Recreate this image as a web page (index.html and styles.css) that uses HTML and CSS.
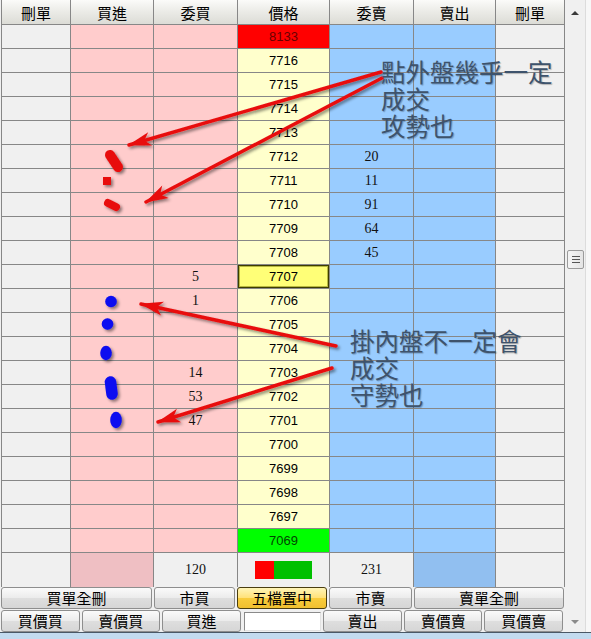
FILE: index.html
```html
<!DOCTYPE html>
<html lang="zh-Hant">
<head>
<meta charset="utf-8">
<title>五檔報價</title>
<link rel="stylesheet" href="styles.css">
</head>
<body>
<div class="window">
  <div class="top">
    <div class="main">
      <div class="grid">
        <div class="h">刪單</div><div class="h">買進</div><div class="h">委買</div><div class="h">價格</div><div class="h">委賣</div><div class="h">賣出</div><div class="h">刪單</div>

        <div class="c side"></div><div class="c buy"></div><div class="c buy q"></div><div class="c price up">8133</div><div class="c sell q"></div><div class="c sell"></div><div class="c side"></div>
        <div class="c side"></div><div class="c buy"></div><div class="c buy q"></div><div class="c price">7716</div><div class="c sell q"></div><div class="c sell"></div><div class="c side"></div>
        <div class="c side"></div><div class="c buy"></div><div class="c buy q"></div><div class="c price">7715</div><div class="c sell q"></div><div class="c sell"></div><div class="c side"></div>
        <div class="c side"></div><div class="c buy"></div><div class="c buy q"></div><div class="c price">7714</div><div class="c sell q"></div><div class="c sell"></div><div class="c side"></div>
        <div class="c side"></div><div class="c buy"></div><div class="c buy q"></div><div class="c price">7713</div><div class="c sell q"></div><div class="c sell"></div><div class="c side"></div>
        <div class="c side"></div><div class="c buy"></div><div class="c buy q"></div><div class="c price">7712</div><div class="c sell q">20</div><div class="c sell"></div><div class="c side"></div>
        <div class="c side"></div><div class="c buy"></div><div class="c buy q"></div><div class="c price">7711</div><div class="c sell q">11</div><div class="c sell"></div><div class="c side"></div>
        <div class="c side"></div><div class="c buy"></div><div class="c buy q"></div><div class="c price">7710</div><div class="c sell q">91</div><div class="c sell"></div><div class="c side"></div>
        <div class="c side"></div><div class="c buy"></div><div class="c buy q"></div><div class="c price">7709</div><div class="c sell q">64</div><div class="c sell"></div><div class="c side"></div>
        <div class="c side"></div><div class="c buy"></div><div class="c buy q"></div><div class="c price">7708</div><div class="c sell q">45</div><div class="c sell"></div><div class="c side"></div>
        <div class="c side"></div><div class="c buy"></div><div class="c buy q">5</div><div class="c price cur">7707</div><div class="c sell q"></div><div class="c sell"></div><div class="c side"></div>
        <div class="c side"></div><div class="c buy"></div><div class="c buy q">1</div><div class="c price">7706</div><div class="c sell q"></div><div class="c sell"></div><div class="c side"></div>
        <div class="c side"></div><div class="c buy"></div><div class="c buy q"></div><div class="c price">7705</div><div class="c sell q"></div><div class="c sell"></div><div class="c side"></div>
        <div class="c side"></div><div class="c buy"></div><div class="c buy q"></div><div class="c price">7704</div><div class="c sell q"></div><div class="c sell"></div><div class="c side"></div>
        <div class="c side"></div><div class="c buy"></div><div class="c buy q">14</div><div class="c price">7703</div><div class="c sell q"></div><div class="c sell"></div><div class="c side"></div>
        <div class="c side"></div><div class="c buy"></div><div class="c buy q">53</div><div class="c price">7702</div><div class="c sell q"></div><div class="c sell"></div><div class="c side"></div>
        <div class="c side"></div><div class="c buy"></div><div class="c buy q">47</div><div class="c price">7701</div><div class="c sell q"></div><div class="c sell"></div><div class="c side"></div>
        <div class="c side"></div><div class="c buy"></div><div class="c buy q"></div><div class="c price">7700</div><div class="c sell q"></div><div class="c sell"></div><div class="c side"></div>
        <div class="c side"></div><div class="c buy"></div><div class="c buy q"></div><div class="c price">7699</div><div class="c sell q"></div><div class="c sell"></div><div class="c side"></div>
        <div class="c side"></div><div class="c buy"></div><div class="c buy q"></div><div class="c price">7698</div><div class="c sell q"></div><div class="c sell"></div><div class="c side"></div>
        <div class="c side"></div><div class="c buy"></div><div class="c buy q"></div><div class="c price">7697</div><div class="c sell q"></div><div class="c sell"></div><div class="c side"></div>
        <div class="c side"></div><div class="c buy"></div><div class="c buy q"></div><div class="c price down">7069</div><div class="c sell q"></div><div class="c sell"></div><div class="c side"></div>

        <div class="s side"></div><div class="s buysum"></div><div class="s q">120</div><div class="s mid"><span class="bar"><span class="bar-r"></span><span class="bar-g"></span></span></div><div class="s q">231</div><div class="s sellsum"></div><div class="s side"></div>
      </div>
      <div class="btns1">
        <div class="btn">買單全刪</div>
        <div class="btn">市買</div>
        <div class="btn gold">五檔置中</div>
        <div class="btn">市賣</div>
        <div class="btn">賣單全刪</div>
      </div>
      <div class="btns2">
        <div class="btn">買價買</div>
        <div class="btn">賣價買</div>
        <div class="btn">買進</div>
        <div class="field"></div>
        <div class="btn">賣出</div>
        <div class="btn">賣價賣</div>
        <div class="btn">買價賣</div>
      </div>
    </div>
    <div class="scroll">
      <div class="sb-up"><span class="tri-up"></span></div>
      <div class="thumb"><span></span><span></span><span></span></div>
      <div class="sb-fill"></div>
      <div class="sb-down"><span class="tri-down"></span></div>
    </div>
    <div class="edge"></div>
  </div>
  <div class="footer"></div>

  <svg class="overlay" width="591" height="639" viewBox="0 0 591 639" aria-hidden="true">
    <defs>
      <filter id="sh" x="-20%" y="-20%" width="140%" height="140%">
        <feDropShadow dx="2" dy="2" stdDeviation="1.5" flood-color="#000" flood-opacity="0.45"/>
      </filter>
      <marker id="ah" viewBox="-24 -8 26 16" refX="0" refY="0" markerWidth="26" markerHeight="16" markerUnits="userSpaceOnUse" orient="auto">
        <path d="M1,0 L-22,-7 L-16,0 L-22,7 Z" fill="#e81010"/>
      </marker>
    </defs>
    <g filter="url(#sh)" stroke="#e81010" stroke-width="3.5" fill="none" stroke-linecap="round">
      <line x1="381" y1="72" x2="129" y2="145" marker-end="url(#ah)"/>
      <line x1="382" y1="78" x2="146" y2="202" marker-end="url(#ah)"/>
      <line x1="336" y1="346" x2="141" y2="304" marker-end="url(#ah)"/>
      <line x1="332" y1="368" x2="158" y2="422" marker-end="url(#ah)"/>
    </g>
    <g filter="url(#sh)">
      <line x1="110" y1="155" x2="118" y2="167" stroke="#e81010" stroke-width="10" stroke-linecap="round"/>
      <rect x="103" y="177" width="8" height="8" fill="#e81010"/>
      <line x1="108" y1="203" x2="116" y2="207" stroke="#e81010" stroke-width="8" stroke-linecap="round"/>
      <circle cx="111" cy="301.5" r="5.8" fill="#0a0af0"/>
      <circle cx="107.5" cy="324" r="5.8" fill="#0a0af0"/>
      <ellipse cx="106" cy="353" rx="5.8" ry="7.2" fill="#0a0af0"/>
      <line x1="110.5" y1="382" x2="112" y2="394" stroke="#0a0af0" stroke-width="11.5" stroke-linecap="round"/>
      <ellipse cx="116" cy="420" rx="5.8" ry="8.2" fill="#0a0af0"/>
    </g>
  </svg>

  <div class="note note1"><span class="ln">點外盤幾乎一定</span><span class="ln">成交</span><span class="ln">攻勢也</span></div>
  <div class="note note2"><span class="ln">掛內盤不一定會</span><span class="ln">成交</span><span class="ln">守勢也</span></div>
</div>
</body>
</html>
```

FILE: styles.css
```css
html, body {
  margin: 0;
  padding: 0;
}
body {
  width: 591px;
  height: 639px;
  overflow: hidden;
  background: #f0f0f0;
  font-family: "Noto Sans CJK TC", "Liberation Sans", sans-serif;
}
.window {
  position: relative;
  width: 591px;
  height: 639px;
  background: #f0f0f0;
  display: flex;
  flex-direction: column;
}
.top {
  display: flex;
  height: 632px;
}
.main {
  width: 565px;
  display: flex;
  flex-direction: column;
}
.grid {
  margin-left: 1px;
  width: 564px;
  box-sizing: border-box;
  padding: 0 1px;
  display: grid;
  grid-template-columns: 68px 82px 83px 91px 83px 81px 68px;
  grid-template-rows: 24px repeat(22, 23px) 34px;
  gap: 1px;
  background: #878787;
}
.h {
  background: linear-gradient(#fbfbf9, #ecece8 45%, #dcdcd6);
  display: flex;
  align-items: center;
  justify-content: center;
  font-size: 15px;
  color: #000;
  line-height: 1;
}
.c, .s {
  display: flex;
  align-items: center;
  justify-content: center;
  line-height: 1;
}
.side { background: #f0f0f0; }
.buy { background: #ffcccc; }
.sell { background: #99ccff; }
.q {
  font-family: "Liberation Serif", "Noto Sans CJK TC", serif;
  font-size: 14px;
  color: #111;
}
.price {
  background: #ffffcc;
  font-family: "Liberation Sans", sans-serif;
  font-size: 13px;
  color: #000;
}
.price.up { background: #ff0000; color: #6a0000; }
.price.down { background: #00ff00; color: #004400; }
.price.cur {
  background: #ffff77;
  box-shadow: inset 0 0 0 1px #3d3d00, inset 0 0 0 2px #b8b840;
}
.s { background: #f0f0f0; }
.s.buysum { background: #efbfc3; }
.s.sellsum { background: #91bff0; }
.bar {
  display: flex;
  width: 57px;
  height: 18px;
  margin-left: -1px;
}
.bar-r { width: 19px; background: #ff0000; }
.bar-g { flex: 1; background: #00c000; }

.btns1 {
  display: grid;
  grid-template-columns: 151px 81px 90px 83px 150px;
  column-gap: 2px;
  padding-left: 1px;
  height: 22px;
}
.btns2 {
  display: grid;
  grid-template-columns: repeat(7, 1fr);
  column-gap: 2px;
  padding-left: 1px;
  width: 563px;
  box-sizing: border-box;
  height: 23px;
  margin-top: 1px;
}
.btn {
  box-sizing: border-box;
  border: 1px solid #8e8e8e;
  border-radius: 3px;
  background: linear-gradient(#fafafa, #ececec 48%, #dedede 52%, #d6d6d6);
  display: flex;
  align-items: center;
  justify-content: center;
  font-size: 15px;
  color: #000;
  line-height: 1;
}
.btn.gold {
  border: 1px solid #4a3e10;
  background: linear-gradient(#fff5b8, #ffe27a 48%, #f8cc3c 52%, #f0c030);
}
.field {
  box-sizing: border-box;
  margin: 2px 0 1px 1px;
  background: #ffffff;
  border: 1px solid;
  border-color: #8a8a8a #e2e2e2 #e2e2e2 #8a8a8a;
}

.scroll {
  width: 20px;
  display: flex;
  flex-direction: column;
  background: #f0f0f0;
}
.sb-up {
  height: 24px;
  display: flex;
  align-items: center;
  justify-content: center;
}
.tri-up {
  width: 0;
  height: 0;
  border-left: 4px solid transparent;
  border-right: 4px solid transparent;
  border-bottom: 4px solid #3a3a3a;
  margin-top: 2px;
}
.thumb {
  margin: 226px 0 0 2px;
  width: 17px;
  height: 19px;
  box-sizing: border-box;
  border: 1px solid #9a9a9a;
  border-radius: 2px;
  background: linear-gradient(90deg, #f4f4f4, #e4e4e4);
  display: flex;
  flex-direction: column;
  align-items: center;
  justify-content: center;
  gap: 2px;
}
.thumb span {
  width: 8px;
  height: 1px;
  background: #555;
}
.sb-fill { flex: 1; }
.sb-down {
  height: 20px;
  display: flex;
  align-items: center;
  justify-content: center;
}
.tri-down {
  width: 0;
  height: 0;
  border-left: 4px solid transparent;
  border-right: 4px solid transparent;
  border-top: 4px solid #8a8a8a;
}
.edge {
  width: 6px;
  box-sizing: border-box;
  border-left: 1px solid #dcdcdc;
  background: #f7f7f7;
}
.footer {
  height: 7px;
  border-top: 1px solid #4a5866;
  background: #c3dbef;
}

.overlay {
  position: absolute;
  left: 0;
  top: 0;
  pointer-events: none;
}
.note {
  position: absolute;
  display: flex;
  flex-direction: column;
  font-family: "Noto Sans CJK TC", sans-serif;
  font-size: 24.5px;
  color: #3e536c;
  text-shadow: 1px 1px 1px rgba(0, 0, 0, 0.25);
  white-space: nowrap;
}
.note .ln {
  display: block;
  height: 27px;
  line-height: 27px;
  overflow: visible;
}
.note1 { left: 381px; top: 58px; }
.note2 { left: 350px; top: 327px; }
```
